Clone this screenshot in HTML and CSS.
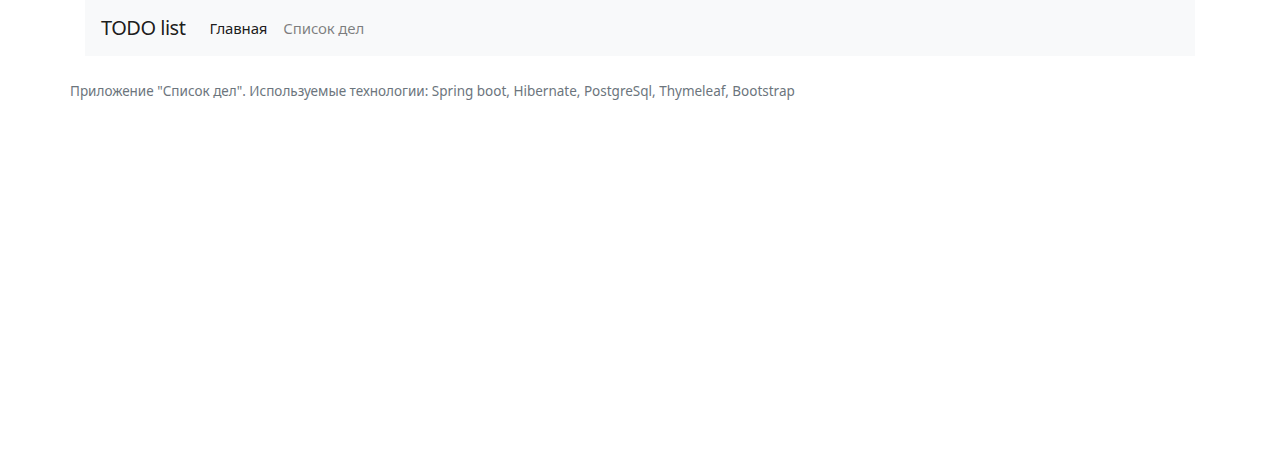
FILE: index.html
```html
<!DOCTYPE html>
<html lang="ru">
<head>
<meta charset="utf-8">
<title>TODO list</title>
<link rel="stylesheet" href="styles.css">
</head>
<body>
<div class="container">
  <nav class="navbar">
    <a class="brand" href="#">TODO list</a>
    <ul class="nav">
      <li><a class="nav-link active" href="#">Главная</a></li>
      <li><a class="nav-link" href="#">Список дел</a></li>
    </ul>
  </nav>
  <div class="row">
    <p class="lead-muted">Приложение "Список дел". Используемые технологии: Spring boot, Hibernate, PostgreSql, Thymeleaf, Bootstrap</p>
  </div>
</div>
</body>
</html>
```
FILE: styles.css
```css
* { box-sizing: border-box; }
html, body { margin: 0; padding: 0; background: #fff; }
body {
  font-family: "Noto Sans", "Open Sans", sans-serif;
  font-size: 16px;
  line-height: 1.5;
  color: #212529;
}
.container {
  width: 1140px;
  margin-left: calc((100% - 1141px) / 2);
  padding: 0 15px;
}
.navbar {
  display: flex;
  align-items: center;
  height: 56px;
  padding: 8px 16px;
  background: #f8f9fa;
}
.brand {
  font-size: 20px;
  color: rgba(0,0,0,.9);
  text-decoration: none;
  margin-right: 16px;
  padding: 5px 0;
  letter-spacing: -0.5px;
}
.nav {
  display: flex;
  list-style: none;
  margin: 0;
  padding: 0;
}
.nav-link {
  display: block;
  padding: 8px;
  font-size: 15px;
  color: rgba(0,0,0,.5);
  text-decoration: none;
  letter-spacing: -0.15px;
}
.nav-link.active { color: rgba(0,0,0,.9); }
.row {
  display: flex;
  margin: 0 -15px;
  padding-top: 25px;
}
.lead-muted {
  margin: 0;
  font-size: 13.5px;
  color: #6c757d;
}
```
